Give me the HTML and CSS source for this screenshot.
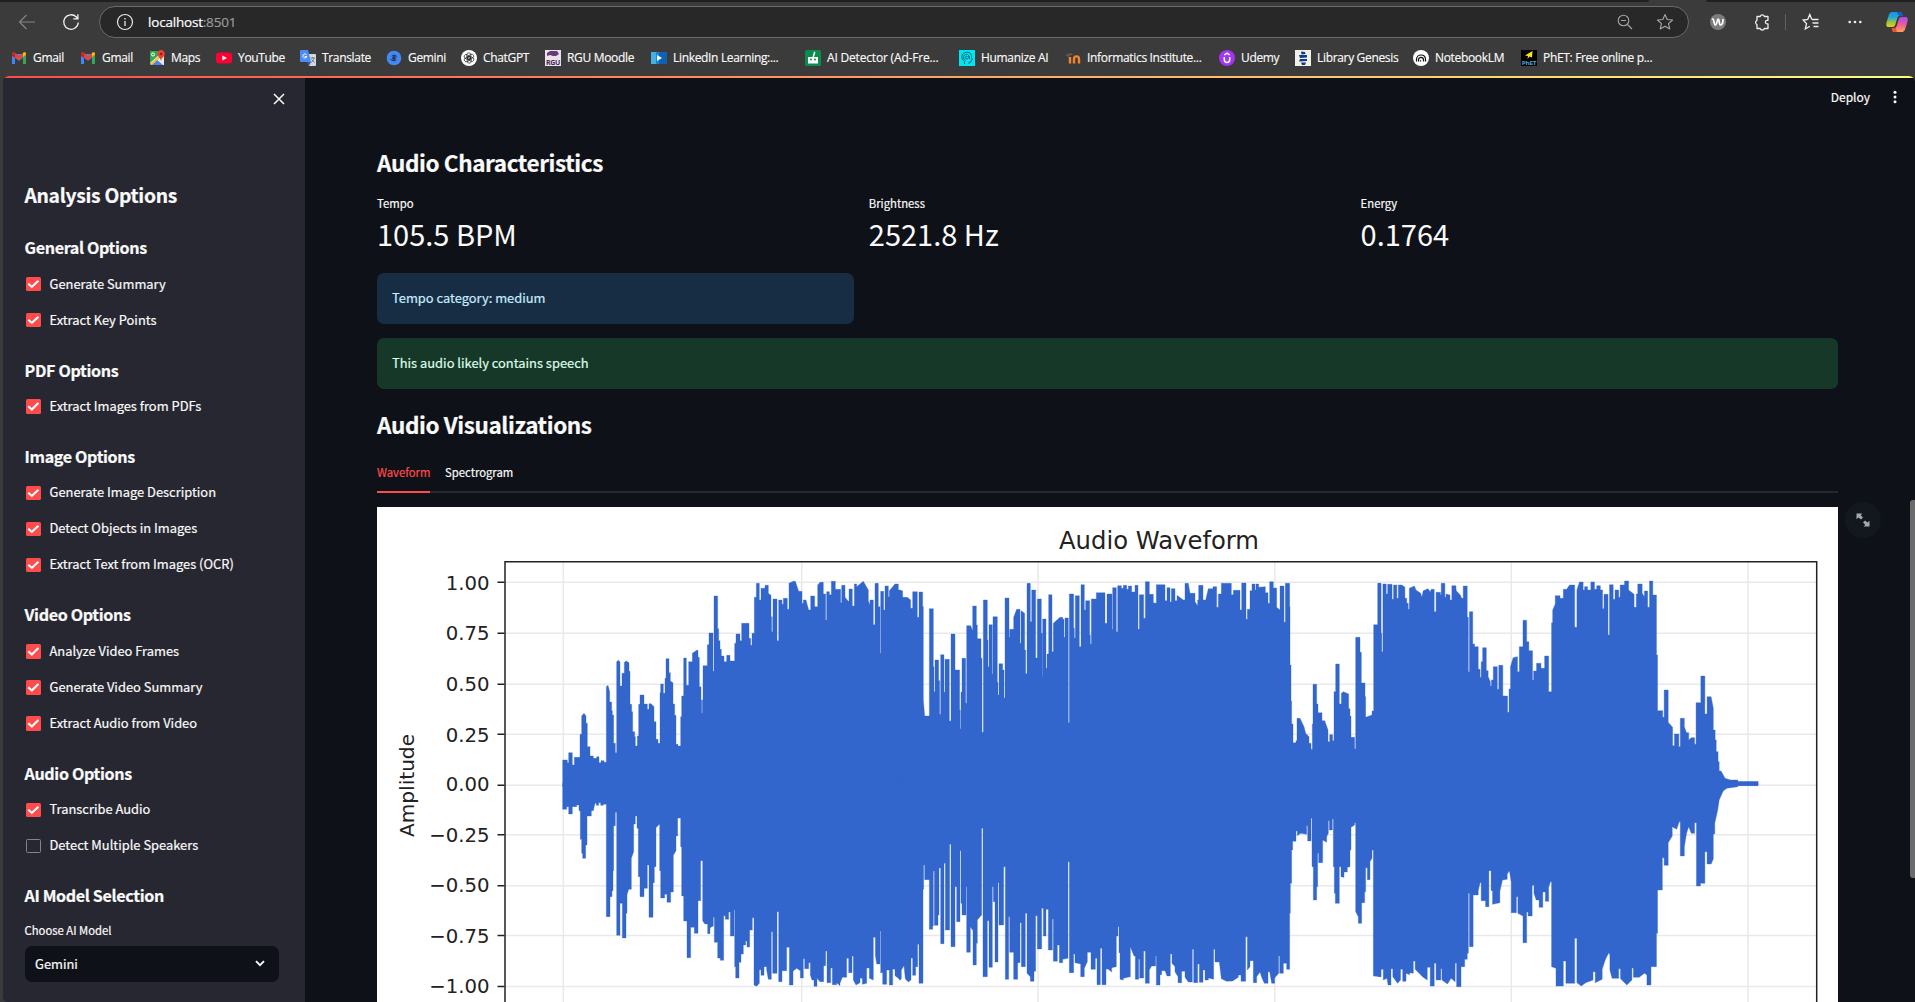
FILE: index.html
```html
<!DOCTYPE html>
<html lang="en">
<head>
<meta charset="utf-8">
<title>localhost:8501</title>
<link rel="stylesheet" href="styles.css">
</head>
<body>
<div class="browser">
  <div class="tabstrip"><i class="strip-left"></i><i class="strip-right"></i></div>
  <div class="toolbar">
    <svg class="ico back" width="18" height="18" viewBox="0 0 18 18"><path d="M17 9H2M8.500 2L1.500 9l7 7" fill="none" stroke="#858585" stroke-width="1.200"/></svg>
    <svg class="ico reload" width="18" height="18" viewBox="0 0 18 18"><path d="M16.300 9.500a7.300 7.300 0 1 1-2-5.500l1.500 1.700M15.900 1.200v4.600h-4.600" fill="none" stroke="#f2f2f2" stroke-width="1.300"/></svg>
    <div class="address">
      <svg width="18" height="18" viewBox="0 0 18 18"><circle cx="9" cy="9" r="7.500" fill="none" stroke="#e8e8e8" stroke-width="1.200"/><path d="M9 8v5M9 5v1.500" stroke="#e8e8e8" stroke-width="1.300"/></svg>
      <span class="url">localhost<b>:8501</b></span>
      <svg class="mag" width="16" height="16" viewBox="0 0 16 16"><path d="M4 6.500h5M10.500 10.500L15 15" stroke="#a5a5a5" stroke-width="1.200"/><circle cx="6.500" cy="6.500" r="5.300" fill="none" stroke="#a5a5a5" stroke-width="1.100"/></svg>
      <svg class="star" width="18" height="18" viewBox="0 0 18 18"><path d="M9 1.500l2.200 5 5.400.500-4.100 3.600 1.300 5.400L9 13.200 4.200 16l1.300-5.400L1.400 7l5.400-.500z" fill="none" stroke="#a5a5a5" stroke-width="1.100" stroke-linejoin="round"/></svg>
    </div>
    <svg class="ext" width="16" height="16" viewBox="0 0 16 16"><circle cx="8" cy="8" r="8" fill="#7c7c7c"/><path d="M1.800 5h1.200c1 0 .900 6 2.500 6S7 5 8.200 5s.800 6 2.300 6c2 0 2.700-3 2.500-6" fill="none" stroke="#fff" stroke-width="1.700"/></svg>
    <svg class="puzzle" width="18" height="18" viewBox="0 0 18 18"><path d="M4 3.500h3.200a2.200 2.200 0 0 1 4.200 0H15v3.800h-.800a1.800 1.800 0 0 0 0 3.600h.800v4.600h-3.600a2.200 2.200 0 0 1-4.200 0H4v-4a2.300 2.300 0 0 1 0-4.200z" fill="none" stroke="#f0f0f0" stroke-width="1.300" stroke-linejoin="round"/></svg>
    <i class="divider"></i>
    <svg class="favs" width="18" height="18" viewBox="0 0 18 18"><path d="M7.800 13.200L3.300 16l1.200-5.400L1.200 7l4.500-.500 2.100-5 2 5M10 6.500h6.500M10.500 10h6M11.500 13.500h5" fill="none" stroke="#f0f0f0" stroke-width="1.300"/></svg>
    <svg class="more" width="14" height="4" viewBox="0 0 14 4"><circle cx="1.700" cy="2" r="1.300" fill="#eee"/><circle cx="7" cy="2" r="1.300" fill="#eee"/><circle cx="12.300" cy="2" r="1.300" fill="#eee"/></svg>
    <svg class="copilot" width="22" height="22" viewBox="0 0 22 22">
      <defs>
        <linearGradient id="cl" x1="0" y1="0" x2="0" y2="1"><stop offset="0" stop-color="#1692e8"/><stop offset=".35" stop-color="#20a8d8"/><stop offset=".7" stop-color="#9bc73b"/><stop offset="1" stop-color="#f6c50c"/></linearGradient>
        <linearGradient id="cr" x1="0" y1="0" x2="0" y2="1"><stop offset="0" stop-color="#a64cf0"/><stop offset=".5" stop-color="#ee5a9a"/><stop offset="1" stop-color="#ffa552"/></linearGradient>
      </defs>
      <path d="M6 1h8c2 0 2 2 2.500 4h-3c-1.500 0-2 1-2.500 3L9.500 13c-.500 2-1.300 3-3 3H3c-3 0-3-2-2.500-4.500L3 3.500C3.500 2 4.500 1 6 1z" fill="url(#cl)"/>
      <path d="M11 1h3c2 0 2 2 2.500 4h-3.500z" fill="#1560c8"/>
      <path d="M16 21H8.500c-2 0-2.300-2-2.700-4h2.500c1.500 0 2.300-1 2.700-3l1.500-5c.500-2 1.300-3 3-3H19c3 0 3 2 2.500 4.500l-2.500 8c-.500 1.500-1.500 2.500-3 2.500z" fill="url(#cr)"/>
      <path d="M11 21H8.500c-2 0-2.300-2-2.700-4h4z" fill="#f0512e"/>
    </svg>
  </div>
  <nav class="bookmarks">
    <a><svg viewBox="0 0 16 16"><path d="M1 4v10h3V8l4 3 4-3v6h3V4" fill="#4285f4"/><path d="M4 8l4 3 4-3v7H4z" fill="#3b3b3b"/><path d="M12 8v6h3V4l-3 2z" fill="#34a853"/><path d="M1 4l7 6.500L15 4c0-2-2-2-3-1L8 6 4 3C3 2 1 2 1 4z" fill="#ea4335"/><path d="M12 3v4l3-2.500V4c0-2-2-2-3-1z" fill="#fbbc04"/><path d="M1 4v2l3 2V4L2 2.500z" fill="#c5221f"/></svg>Gmail</a>
    <a><svg viewBox="0 0 16 16"><path d="M1 4v10h3V8l4 3 4-3v6h3V4" fill="#4285f4"/><path d="M4 8l4 3 4-3v7H4z" fill="#3b3b3b"/><path d="M12 8v6h3V4l-3 2z" fill="#34a853"/><path d="M1 4l7 6.500L15 4c0-2-2-2-3-1L8 6 4 3C3 2 1 2 1 4z" fill="#ea4335"/><path d="M12 3v4l3-2.500V4c0-2-2-2-3-1z" fill="#fbbc04"/><path d="M1 4v2l3 2V4L2 2.500z" fill="#c5221f"/></svg>Gmail</a>
    <a><svg viewBox="0 0 16 16"><path d="M1 1h13v14H1z" fill="#34a853"/><path d="M1 13L12 3l3 3v9H4z" fill="#e8eaed"/><path d="M7 9l7 6H2z" fill="#4285f4"/><path d="M1 14L12 4l1 2L3 15z" fill="#fbc02d"/><path d="M12 0a3.800 3.800 0 0 0-3.700 4c0 2.500 3.200 3.500 3.700 7 .500-3.500 3.700-4.500 3.700-7A3.800 3.800 0 0 0 12 0z" fill="#ea4335"/><circle cx="12" cy="4" r="1.300" fill="#a11"/><circle cx="4" cy="4.500" r="1.500" fill="none" stroke="#fff"/></svg>Maps</a>
    <a><svg viewBox="0 0 16 16"><rect y="2.500" width="16" height="11" rx="3" fill="#ff0033"/><path d="M6.300 5.500v5L11 8z" fill="#fff"/></svg>YouTube</a>
    <a><svg viewBox="0 0 16 16"><path d="M6 4h9a1 1 0 0 1 1 1v10a1 1 0 0 1-1 1H9z" fill="#d5d8dc"/><path d="M1 0h7l3 12H1a1 1 0 0 1-1-1V1a1 1 0 0 1 1-1z" fill="#4d8bf5"/><path d="M7 12h4l-2 4z" fill="#2a5bb8"/><path d="M6.500 4.800a2 2 0 1 0 .300 1.700H4.800" fill="none" stroke="#fff"/><path d="M10.500 8H15M12.500 7v1M14 8c-.500 2.500-2 4-3 4.500M11.500 9.500l3 3" fill="none" stroke="#71808e"/></svg>Translate</a>
    <a><svg viewBox="0 0 16 16"><circle cx="8" cy="8" r="7.300" fill="#4488f4"/><path d="M5 6.500C7 3.500 11 4.500 12 8c-1.500-2-4-2.500-7-1.500zM11 9.500C9 12.500 5 11.500 4 8c1.500 2 4 2.500 7 1.500z" fill="#183b78"/><circle cx="8" cy="8" r="1.900" fill="#2b3a55"/></svg>Gemini</a>
    <a><svg viewBox="0 0 16 16"><circle cx="8" cy="8" r="8" fill="#fff"/><g fill="none" stroke="#222" stroke-width=".7"><rect x="5.800" y="2.800" width="4" height="6.500" rx="2"/><rect x="5.800" y="2.800" width="4" height="6.500" rx="2" transform="rotate(60 8 8)"/><rect x="5.800" y="2.800" width="4" height="6.500" rx="2" transform="rotate(120 8 8)"/><rect x="5.800" y="2.800" width="4" height="6.500" rx="2" transform="rotate(180 8 8)"/><rect x="5.800" y="2.800" width="4" height="6.500" rx="2" transform="rotate(240 8 8)"/><rect x="5.800" y="2.800" width="4" height="6.500" rx="2" transform="rotate(300 8 8)"/></g></svg>ChatGPT</a>
    <a><svg viewBox="0 0 16 16"><path d="M0 0h16v16H0z" fill="#e9e2ec"/><path d="M2 3l3-2h7l2 3-3 2H8L5 5 2 6z" fill="#6b3a78"/><text x="1" y="14.500" font-size="7.500" font-weight="700" textLength="14" lengthAdjust="spacingAndGlyphs" fill="#4b2558">RGU</text></svg>RGU Moodle</a>
    <a><svg viewBox="0 0 16 16"><path d="M0 2h16v12H0z" fill="#0d62b4"/><path d="M0 2h5v12H0z" fill="#45b0e4"/><path d="M5 2h3v12H5z" fill="#1b86cf"/><path d="M6 5v6l5-3z" fill="#fff"/></svg>LinkedIn Learning:...</a>
    <a class="wide"><svg viewBox="0 0 16 16"><rect width="16" height="16" rx="1.500" fill="#0c8c4a"/><path d="M3 7h4.500L9 1.500l1.500.800L9 7h4v6.500H3z" fill="#fff"/><circle cx="6" cy="9.500" r="1" fill="#0c8c4a"/><circle cx="10" cy="9.500" r="1" fill="#0c8c4a"/></svg>AI Detector (Ad-Fre...</a>
    <a><svg viewBox="0 0 16 16"><path d="M0 0h16v16H0z" fill="#00e5f5"/><path d="M5.500 14v-2.500C1.500 9 2 2.500 7.500 2.300c4-.2 5.500 2.700 5 5.200l1 2-1.300.500v2l-2.200.5V14M8.500 6.500a1.300 1.300 0 1 0-.5 2.300c2.500-.3 2.500-4.500-.5-4.500-3.500 0-4 5-1 6M10.500 6v3" fill="none" stroke="#0a5966" stroke-width=".9"/></svg>Humanize AI</a>
    <a><svg viewBox="0 0 16 16"><path d="M5 13.500V7M9 13.500V9c0-3.500 5-3.500 5 0v4.500" fill="none" stroke="#f2852c" stroke-width="2.400"/><path d="M0 5l6-2 2 1.500L4 6v4L2.500 6z" fill="#6c5648"/></svg>Informatics Institute...</a>
    <a><svg viewBox="0 0 16 16"><circle cx="8" cy="8" r="8" fill="#a435f0"/><path d="M5.300 7v2.500c0 4 5.400 4 5.400 0V7M5.300 5L8 3.200 10.700 5" fill="none" stroke="#fff" stroke-width="1.500"/></svg>Udemy</a>
    <a><svg viewBox="0 0 16 16"><path d="M0 0h16v16H0z" fill="#f2f1e4"/><path d="M6 1.500l4 .5.500 2-4 .5zM4 5h8v2.500l-7 .5zM5 9h7v2l-8 .500zM6 12.500h5l-1 2.500H7z" fill="#0d3b8e"/></svg>Library Genesis</a>
    <a><svg viewBox="0 0 16 16"><circle cx="8" cy="8" r="8" fill="#fff"/><path d="M3.500 11.500V9.500c0-6 9-6 9 0v2M5.500 11.500V10c0-3.500 5-3.500 5 0v1.500M7.500 11.500v-1.200" fill="none" stroke="#111" stroke-width="1.200"/></svg>NotebookLM</a>
    <a><svg viewBox="0 0 16 16"><path d="M0 0h16v16H0z" fill="#000"/><path d="M4 5.500L11.500 1 11 7.500 8.500 6.500 6.500 9l.500-3z" fill="#f6e81a"/><text x=".8" y="14.600" font-size="6" font-weight="700" textLength="14.400" lengthAdjust="spacingAndGlyphs" fill="#4ba6d8">PhET</text></svg>PhET: Free online p...</a>
  </nav>
</div>

<div class="page">
  <aside class="sidebar">
    <div class="close"><svg width="12" height="12" viewBox="0 0 12 12"><path d="M1 1l10 10M11 1L1 11" stroke="#fafafa" stroke-width="1.500"/></svg></div>
    <h2>Analysis Options</h2>
    <h3>General Options</h3>
    <label class="on">Generate Summary</label>
    <label class="on">Extract Key Points</label>
    <h3>PDF Options</h3>
    <label class="on">Extract Images from PDFs</label>
    <h3>Image Options</h3>
    <label class="on">Generate Image Description</label>
    <label class="on">Detect Objects in Images</label>
    <label class="on">Extract Text from Images (OCR)</label>
    <h3>Video Options</h3>
    <label class="on">Analyze Video Frames</label>
    <label class="on">Generate Video Summary</label>
    <label class="on">Extract Audio from Video</label>
    <h3>Audio Options</h3>
    <label class="on">Transcribe Audio</label>
    <label>Detect Multiple Speakers</label>
    <h3>AI Model Selection</h3>
    <div class="caption">Choose AI Model</div>
    <div class="select"><span>Gemini</span><svg width="10" height="7" viewBox="0 0 10 7"><path d="M1 1.200l4 4 4-4" fill="none" stroke="#fafafa" stroke-width="1.900"/></svg></div>
  </aside>
  <main class="main">
    <header class="appbar"><span>Deploy</span><svg width="4" height="14" viewBox="0 0 4 14"><circle cx="2" cy="2.300" r="1.500" fill="#fafafa"/><circle cx="2" cy="7" r="1.500" fill="#fafafa"/><circle cx="2" cy="11.700" r="1.500" fill="#fafafa"/></svg></header>
    <div class="content">
      <h2>Audio Characteristics</h2>
      <div class="metrics">
        <div><p>Tempo</p><strong>105.5 BPM</strong><div class="alert info">Tempo category: medium</div></div>
        <div><p>Brightness</p><strong>2521.8 Hz</strong></div>
        <div><p>Energy</p><strong>0.1764</strong></div>
      </div>
      <div class="alert success">This audio likely contains speech</div>
      <h2 class="viz">Audio Visualizations</h2>
      <div class="tabs"><span class="active">Waveform</span><span class="spec">Spectrogram</span></div>
      <div class="figure">
        <svg class="chart" width="1461" height="495" viewBox="377 507 1461 495">
          <rect x="377" y="507" width="1461" height="495" fill="#fff"/>
          <path class="grid" d="M563.300 562v440M801.700 562v440M1038 562v440M1274.700 562v440M1511.300 562v440M1748 562v440M505 582.200h1311M505 633.300h1311M505 684.300h1311M505 734.300h1311M505 785.200h1311M505 834.800h1311M505 885.800h1311M505 935.500h1311M505 986.500h1311"/>
          <g class="wave">
            <g transform="translate(380 500) scale(.33333)">
              <path d="M548,860V780H562V788H566V758H577V795H583V772H600V703H605V648L612,640L618,648V670H622V740H630V768H640V775H650V770H657V788H663V782H672V787H679V560L684,556L689,575V606H695V632H697V645H701V730H706V758H710V485L715,481L720,485V558H726V520H733V487L739,483L747,488V514H750V613H755V635H758V695H764V710H766V738H772V708H776V613H780V585H792V612H802V628H807V611H813L822,620V665H828V718H834V730H840V578H842V552H850V580H855V535H858V476H867V518H871V543L879,548V612H884V646H888V733H894V738H902V650H905V588H911V474H919V556H926V485H937V460L950,451H954V472H958V560H963V600H965V640H967V600H969V497H982V434H987V399H999V514H1002V288H1013V386H1016V422H1020V448H1024V468H1032V485H1040V466H1050V483H1064V430H1068V402H1080V422H1085V370H1107V415H1112V436H1116V400H1123V292H1129V250H1138V300H1143V265H1155V256H1165V280L1173,286V350H1175V395H1178V350H1179V297H1191V422H1196V300H1206V313H1210V295H1222V328H1227V250L1240,244H1246L1256,274H1266V310H1270V300H1278L1286,330H1292V288H1304V320H1313V255L1320,247H1330V282H1337V360H1340V275H1348V284H1354V244H1366V268H1382V308H1385V256H1395V292L1405,304H1407V267H1417V318H1423V252H1430V260L1450,244L1465,270V302L1470,315V300H1480V374H1485V250H1495V320H1500V460H1502V274H1511V330H1515V258H1525V290H1528V272L1545,252L1555,252V270H1562V860Z"/>
              <path d="M548,850V928H560V920H566V942H577V920H590V915H597V932H601V1018H605V1060H608V1075H617V1035H621V948H634V932H640L645,910H649V916H656V908H662V916H670V913H679V1250H690V1190H696V1172H699V1112H701V977H706V937H710V1306H720V1210H727V1314H738V1240H741V1185L746,1168H754V1075L761,1055V972H766V948H771V985H775V1130H780V1190H792V1165H802V1095H807V1252H819V1148H823V1100H828V983L839,972V1112H842V1194H854V1183H861V1207H872V1176H880V1066L888,1052V1008H893V954H902V1040H905V1188H911V1263H921V1373H932V1282H943V1300H954V1202H962V1082H968V1263L975,1272H983V1301H990V1283L1000,1278V1252H1003V1327H1013V1374H1021V1381H1031V1247H1036V1258H1046V1236H1051V1308H1062V1230H1064V1400H1067V1434H1077V1387H1083V1362H1090V1335H1097V1323H1101V1341H1109V1290H1117V1253H1122V1455L1130,1459L1138,1450V1409H1143V1426H1152V1400H1160V1410L1165,1438H1174V1295H1178V1420H1191V1235H1196V1445H1206V1412H1220V1342H1228V1455H1239V1414L1250,1405L1261,1412V1434H1270V1376H1274V1406H1286V1388H1291V1425L1296,1440H1302V1459H1311V1435L1320,1445H1331V1397H1337V1353H1341V1448H1352V1404H1357V1454H1370V1448L1380,1457V1450L1387,1432H1400V1375H1406V1418H1416V1368H1420V1440L1428,1455L1440,1448V1435H1447V1453L1460,1450V1404H1468V1435L1480,1440V1312H1486V1365L1490,1392H1500V1293H1502V1418H1508V1453H1520V1410H1528V1455H1538V1408H1545V1427L1562,1440V850Z"/>
            </g>
            <g transform="translate(860 500) scale(.33333)">
              <path d="M118,860V272H128V292H142L152,300V325H158V275H172V352H177V276H188V320H190V600L194,648H208V326H220V500H222V575H225V480H236V542H239V643H242V464H252V577H255V478H268V663H273V402H285V510H299V630H301V686H303V576H306V475H317V610H320V377H332L338,392V318H349V375H352V416H363V475H366V697H370V300H382V420H384V500H387V374H397V522H399V350H412V547H414V585H417V491H428V510H432V594H435V294H447V412H449V388H461V352L470,328H480V430H483V332L494,340V450H497V521H501V250H511V365H515V270H527V474H532V297H544V400H547V530H548V357H558V505H561V462H566V284H576V455H580V370L600,352H608V358H612V412H615V354H625V668H628V282H641V385H643V414H646V287H658V440H663V254H673V330H677V302H689V405H691V432H694V297H709V278H735V370H741V282H756V388H758V263H769V395H773V257H784V265H790V256H800V268H805V258H815V276H825V256H834V388H838V284H851V355H856V245H868V283H880V308L889,310V254H915V302H921V263H930V306H934V266H945V302H951V286L970,300H975V250H985L990,280H1005V305L1013,317V300H1016V256H1029V300H1037L1045,266H1059V260H1070V322H1075V282H1084V250H1114V284H1120V271H1140V330H1145V249H1158V358H1162V328H1170V272H1176V252H1185V270H1188V252H1196V262L1216,260V278H1224V310H1229V245H1240V264H1250V322L1260,330V258H1272V367H1276V250H1289V320H1290V495H1293V603H1295V672H1299V728H1308V722H1311V655H1320L1332,680L1337,700L1347,710V730H1353V748H1357V672H1359V553H1370V612H1374V638H1386V662H1394L1404,690V725H1409V704H1418V722H1422V575H1427V492H1438V612H1444V580L1450,575L1466,582V626H1470V648H1473V712H1484V747H1487V412H1500V457H1504V549H1515V590H1517V652L1536,645V633H1541V374H1553V250H1562V860Z"/>
              <path d="M118,850V1440L124,1436V1410L132,1397L136,1437L145,1446L153,1440V1374H158V1426H167V1400H173V1333H177V1450H189V1168H191V1095H194V1139H208V1288H218V1278H220V1113H223V1276H234V1245H237V1104H242V1331H252V1090H256V1290H269V1033H273V1340H285V1160H290V1265H300V1052H303V1210H306V1245H318V1160H320V1357H331V1280L339,1292V1395H349V1330H352V1260L365,1245V985H369V1430H382V1262H387V1402H397V1160H400V1205H405V1386H414V1148H417V1275H431V1100H436V1438H446V1250H449V1357H461V1438H473V1388H480V1268H484V1400H496V1240H501V1420L511,1430V1444H522V1414H527V1247H532V1347H545V1225H550V1308H558V1228H565V1350H577V1257H580V1384H592V1335H598V1388H608V1378L624,1375V1085H628V1418H641V1362H645V1388L662,1392V1430H673V1405L682,1385V1357H693V1408H706V1375H711V1454H721V1345H726V1454H738V1407H744L755,1416V1403L769,1400V1308H774V1280H777V1358H780V1438L790,1440V1435L811,1430V1340L822,1368H826V1438H836V1378H839V1434H851V1353H856V1450H868V1410L875,1398H887V1368H889V1455H900V1424H905V1412H915L921,1428H931V1362H936V1390L945,1400V1415L954,1430V1448H965V1414H975V1432L985,1446H997V1348H1001V1448H1013V1392H1018V1447H1029V1410H1035V1440H1045V1434L1061,1438V1348H1065V1386H1078L1084,1436L1100,1444L1118,1443L1135,1432V1425H1143V1444H1157V1310H1162V1410L1170,1400V1382H1180V1448H1190V1430L1200,1416L1205,1432L1213,1450H1224V1415H1229L1235,1450H1244V1434L1256,1420V1368H1259V1420H1270V1390H1280V1408H1289V1240H1291V1150H1295V1050H1298V1024H1308V993H1312V1007L1322,1000L1340,1003V977H1343V1023H1353V955H1356V1100H1360V1200H1370V1160H1373V1060H1376V1088H1388V1020L1400,1027V1010L1405,1000V962H1408V990H1417V957H1420V1100H1423V1180H1426V1210H1438V1100H1443V1130L1452,1132V1116H1462V1102L1470,1100V1050H1473V982L1484,975V968H1487V1235L1495,1250V1270H1505V1208H1514V1175H1517V1103H1522V1139H1530V1085L1536,1075V1050H1540V1428L1562,1430V850Z"/>
            </g>
            <g transform="translate(1340 480) scale(.3667 .33333)">
              <path d="M105,916V310H112V460H114V515H117V312H126V342H130V313H142V358H146V315H155V355H159V315H169L177,322V355H182V370H186V388H189V325L203,318L207,330L220,340L223,352L227,332L240,326L246,335L249,328H257V395H262V337H274V345H276V310H286V352H289V342L300,345V360H305V317H316L317,332L328,345L332,355H336V318H347V412H350V575H353V395H362V492H367V500H377V568H382V592H385V545H389V503H399V572H404V590L410,605V618H413V600H418V560H429V628H433V556H444V648H457V697H461V627H465V560L472,533L484,530V575H489V500H499V421H509V485H515V512H525V600H528V573H536V550H548V565H558V528H569V635H577V428H580V390L587,372V347H600V355H609V328H618L626,315H640V442H646V330L653,306H663V330H667V320H675V330H684V306H694V328H700V317H710V330H716V386H720V343H731V465H735V314H745V358H750V330H760V352H764V315H776V303H787V330L802,343V382H808V342H812V312H824V340L830,350V333H839V382H844V303H853V345H863V525H866V692H880V712H884V630H895V727L907,742V797H912V762H924V800H928V715H939V740L945,758H951V780L958,773H967V793H971V668H984V588H995V702H1001V650H1012L1018,685V750H1023V780H1026V815H1031V845H1034V873H1039L1050,895L1065,900H1085V905H1140V916Z"/>
              <path d="M105,905V1490H112V1468H118V1500L128,1495L131,1515H139V1466H144V1490L157,1510L165,1500V1468H171V1504H180V1480L190,1484V1478L200,1480V1443H205V1468L225,1490L238,1500V1462H246V1518H257V1450H262V1500H275V1466H278V1500L293,1512L303,1495L314,1505V1450H318V1520H330V1460L340,1460V1438H347V1420H350V1240H353V1400H363V1245H377V1232L382,1208H385V1262H397V1280H406V1172H412V1232H416V1273L436,1268V1234L443,1200L456,1198V1182L462,1172L467,1207V1298H481V1250H485V1300L499,1308V1388H509V1296H513V1308H524V1216H529V1240L535,1260H543V1282H553V1236H560V1264H569V1222L574,1205H577V1460L589,1465V1518H609V1443H616V1510H640V1375H646V1508L658,1518L670,1508L690,1500V1475H696V1508L715,1498V1468L724,1438L733,1418L736,1425V1470L742,1495H760V1466H765V1496L782,1515L796,1500V1464H800V1492H816L830,1480L837,1485V1515H848V1460H863V1360H866V1230H879V1133H884V1156H895V1088L906,1068V1040L918,1048L925,1025H928V1128H939V1100L945,1060L951,1040L958,1060H967V1028H972V1218H983V1210H995V1115H1001V1152H1012L1018,1137V1062H1022V1030L1030,990L1034,960L1045,933L1055,925L1085,920V917H1140V905Z"/>
            </g>
          </g>
          <path class="frame" d="M505 1002V561.700H1816.700V1002"/>
          <path class="frame" d="M497.500 582.200h7M497.500 633.300h7M497.500 684.300h7M497.500 734.300h7M497.500 785.200h7M497.500 834.800h7M497.500 885.800h7M497.500 935.500h7M497.500 986.500h7"/>
          <g class="ticks">
            <text x="489.500" y="589.700">1.00</text><text x="489.500" y="639.700">0.75</text><text x="489.500" y="690.700">0.50</text><text x="489.500" y="741.700">0.25</text><text x="489.500" y="791.200">0.00</text><text x="489.500" y="842">−0.25</text><text x="489.500" y="892">−0.50</text><text x="489.500" y="943">−0.75</text><text x="489.500" y="993">−1.00</text>
          </g>
          <text class="label" x="1059" y="549.300" font-size="25.500" textLength="200" lengthAdjust="spacingAndGlyphs">Audio Waveform</text>
          <text class="label" transform="translate(413.800 837) rotate(-90)" font-size="19.500" textLength="103" lengthAdjust="spacingAndGlyphs">Amplitude</text>
        </svg>
        <div class="expand"><svg width="14" height="14" viewBox="0 0 14 14"><path d="M.5.500h5.800L4.800 2.300l2.200 2.200L5 6.500 2.500 4.500.5 6.300zM13.500 13.500H7.700l1.500-1.800L7 9.500l2-2 2.500 2 2-1.800z" fill="#a6a7aa"/></svg></div>
      </div>
    </div>
  </main>
  <i class="thumb"></i>
</div>
</body>
</html>
```
FILE: styles.css
```css
*, *::before { box-sizing: border-box; margin: 0; padding: 0; }
body {
  width: 1915px; height: 1002px; overflow: hidden;
  display: flex; flex-direction: column;
  background: #3b3b3b; color: #fafafa;
  font-family: "Noto Sans CJK JP", "Noto Sans CJK SC", "Open Sans", sans-serif;
}
svg { flex: none; display: block; }
.browser { height: 76px; flex: none; font-family: "Open Sans", sans-serif; }
.tabstrip { height: 2px; display: flex; justify-content: space-between; }
.tabstrip i { background: #202020; height: 2px; }
.strip-left { width: 1649px; border-radius: 0 0 3px 0; }
.strip-right { width: 209px; border-radius: 0 0 0 3px; }
.toolbar { height: 40px; display: flex; align-items: center; padding-left: 18px; }
.reload { margin-left: 26px; }
.address {
  width: 1590px; height: 32px; margin-left: 19px; padding: 0 14px 0 16px;
  display: flex; align-items: center;
  background: #282828; border: 1px solid #6b6b6b; border-radius: 16px;
}
.url { flex: 1; margin-left: 14px; font-size: 13.500px; letter-spacing: -.2px; color: #fff; -webkit-text-stroke: .2px; }
.url b { font-weight: 400; color: #9a9a9a; }
.star { margin-left: 23px; }
.ext { margin-left: 21px; }
.puzzle { margin-left: 27px; }
.divider { width: 1px; height: 16px; margin-left: 14px; background: #616161; }
.favs { margin-left: 16px; }
.more { margin-left: 28px; }
.copilot { margin-left: 24px; }
.bookmarks {
  height: 32px; padding-left: 11px; display: grid; align-items: center;
  grid-template-columns: 69px 69px 67px 84px 86px 75px 84px 106px 154px 154px 106px 154px 76px 118px 108px 200px;
  font-size: 12px; letter-spacing: -.33px; line-height: 16px; white-space: nowrap; -webkit-text-stroke: .15px;
}
.bookmarks a { display: flex; align-items: center; gap: 6px; height: 16px; }
.bookmarks .wide { letter-spacing: -.18px; }
.bookmarks svg { width: 16px; height: 16px; }

.page {
  height: 926px; margin-left: 3px; display: flex; position: relative; overflow: hidden;
  border-radius: 6px 6px 0 6px; background: #0e1117; -webkit-text-stroke: .2px;
}
.page::before {
  content: ""; position: absolute; inset: 0 0 auto; height: 2px;
  background: linear-gradient(90deg, #ff4b4b, #fffd80);
}
.sidebar { width: 302px; flex: none; background: #262730; padding-left: 21.500px; }
.close { height: 103px; padding: 17px 0 0 248.500px; }
.sidebar h2 { font-size: 19.300px; line-height: 32px; margin-bottom: 4.800px; letter-spacing: -.3px; }
.sidebar h3 { height: 50.400px; padding-top: 13.400px; font-size: 16.100px; line-height: 36px; letter-spacing: -.35px; }
.sidebar label { height: 36px; padding-bottom: 2px; display: flex; align-items: center; font-size: 12.900px; gap: 8.500px; }
.sidebar label::before {
  content: ""; width: 15px; height: 14.500px; margin: 2px 0 0 1.500px; border-radius: 1.500px; border: 1px solid #83848b;
}
.sidebar label.on::before {
  border: 0; background: #ff4b4b;
  background-image: url("data:image/svg+xml,%3Csvg xmlns='http://www.w3.org/2000/svg' viewBox='0 0 15 15'%3E%3Cpath d='M2.300 7.300l3.500 3.300 6.600-6.600' fill='none' stroke='white' stroke-width='2.100'/%3E%3C/svg%3E");
}
.caption { height: 31.700px; line-height: 32px; font-size: 11.300px; }
.select {
  width: 254px; height: 36px; margin-left: 3px; margin-left: .500px; padding: 0 14px 0 10px; display: flex; align-items: center; justify-content: space-between;
  border-radius: 7px; background: #0e1117; font-size: 12.900px;
}
.main { flex: 1; }
.appbar { height: 54px; padding: 0 18px 13px 0; display: flex; align-items: center; justify-content: flex-end; gap: 23px; font-size: 12px; }
.content { width: 1533px; padding-left: 72px; }
.content h2 { height: 56px; line-height: 64px; font-size: 22.500px; letter-spacing: -.4px; }
.metrics { display: grid; grid-template-columns: repeat(3, 1fr); gap: 14.400px; height: 152px; }
.metrics p { height: 31px; line-height: 34px; font-size: 11.300px; }
.metrics strong { display: block; height: 56px; line-height: 33px; font-size: 29px; font-weight: 400; -webkit-text-stroke: 0; }
.alert { height: 51px; padding: 0 15px 2px; display: flex; align-items: center; border-radius: 7px; font-size: 12.900px; }
.info { background: #172d43; color: #c7ebff; }
.success { background: #153828; color: #dffde9; }
.content h2.viz { height: 61px; line-height: 70px; }
.tabs { height: 43px; border-bottom: 2px solid #262730; display: flex; gap: 15px; font-size: 11.300px; line-height: 44px; }
.tabs span { height: 43px; }
.tabs .active { color: #ff4b4b; border-bottom: 2px solid #ff4b4b; width: 53px; }
.figure { margin-top: 14px; display: flex; gap: 7px; }
.expand {
  flex: none; width: 36px; height: 36px; margin-top: -5px; border-radius: 50%;
  display: grid; place-items: center; background: #13171e;
}
.grid { stroke: #e9e9e9; stroke-width: 1.500; }
.wave { fill: #3266cc; stroke: #3266cc; stroke-width: 1; stroke-linejoin: round; }
.frame { fill: none; stroke: #222; stroke-width: 1.500; }
.chart { -webkit-text-stroke: 0; }
.ticks, .label { font-family: "DejaVu Sans", sans-serif; fill: #222; }
.ticks { font-size: 19.700px; text-anchor: end; }
.thumb { position: absolute; right: 0; top: 424px; width: 5px; height: 378px; background: #6b6b6b; border-radius: 3px 0 0 3px; }
```
